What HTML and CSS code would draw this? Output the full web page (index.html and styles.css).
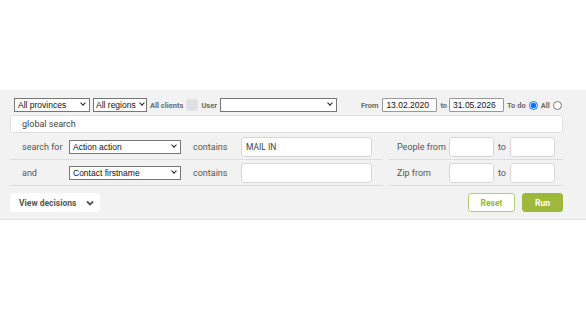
FILE: index.html
```html
<!DOCTYPE html>
<html lang="en">
<head>
  <meta charset="UTF-8">
  <title>Search</title>
  <link rel="stylesheet" href="styles.css">
</head>
<body>
  <div class="panel">
    <div class="topbar">
      <span class="pick sel-prov"><select class="sel"><option>All provinces</option></select></span>
      <span class="pick sel-reg"><select class="sel"><option>All regions</option></select></span>
      <span class="tiny">All clients</span>
      <span class="check"></span>
      <span class="tiny">User</span>
      <span class="pick sel-user"><select class="sel"><option></option></select></span>
      <span class="tiny from">From</span>
      <input class="date" type="text" value="13.02.2020">
      <span class="tiny">to</span>
      <input class="date" type="text" value="31.05.2026">
      <span class="tiny">To do</span>
      <input class="radio" type="radio" name="todo" checked>
      <span class="tiny">All</span>
      <input class="radio" type="radio" name="todo">
    </div>

    <input class="global" type="text" placeholder="global search">

    <div class="grid">
      <div class="row left">
        <span class="lbl lbl-first">search for</span>
        <span class="pick sel-field"><select class="sel"><option>Action action</option></select></span>
        <span class="lbl lbl-op">contains</span>
        <input class="box box-wide" type="text" value="MAIL IN">
      </div>
      <div class="row right">
        <span class="lbl lbl-range">People from</span>
        <input class="box box-small" type="text">
        <span class="lbl lbl-to">to</span>
        <input class="box box-small" type="text">
      </div>
      <div class="row left">
        <span class="lbl lbl-first">and</span>
        <span class="pick sel-field"><select class="sel"><option>Contact firstname</option></select></span>
        <span class="lbl lbl-op">contains</span>
        <input class="box box-wide" type="text">
      </div>
      <div class="row right">
        <span class="lbl lbl-range">Zip from</span>
        <input class="box box-small" type="text">
        <span class="lbl lbl-to">to</span>
        <input class="box box-small" type="text">
      </div>
    </div>

    <div class="actions">
      <button class="btn-decisions">View decisions
        <svg width="8" height="6" viewBox="0 0 8 6"><path d="M1 1.5 L4 4.5 L7 1.5" fill="none" stroke="#555" stroke-width="1.8"/></svg>
      </button>
      <div class="buttons">
        <button class="btn btn-reset">Reset</button>
        <button class="btn btn-run">Run</button>
      </div>
    </div>
  </div>
</body>
</html>
```

FILE: styles.css
```css
body {
  margin: 0;
  font-family: Roboto, 'Open Sans', sans-serif;
  color: #555;
  background-color: white;
}
.panel {
  margin-top: 90px;
  background-color: #f2f2f2;
  border-bottom: 1px solid #e2e2e2;
  padding: 8px 23px 8px 10px;
  height: 113px;
}
.topbar {
  display: flex;
  align-items: center;
  padding-left: 4px;
  height: 14px;
  white-space: nowrap;
}
.topbar > * {
  flex-shrink: 0;
}
.pick {
  position: relative;
  display: block;
  height: 14px;
  flex-shrink: 0;
}
.pick::after {
  content: "";
  position: absolute;
  right: 5px;
  top: 3px;
  width: 3px;
  height: 3px;
  border-right: 1.5px solid #222;
  border-bottom: 1.5px solid #222;
  transform: rotate(45deg);
  pointer-events: none;
}
.sel {
  appearance: none;
  display: block;
  width: 100%;
  font-family: 'Liberation Sans', Arial, sans-serif;
  font-size: 8.5px;
  color: #111;
  height: 14px;
  padding: 0 0 0 3px;
  margin: 0;
  border: 1px solid #767676;
  border-radius: 0;
  background-color: white;
}
.sel-prov { width: 76px; }
.sel-reg { width: 54px; margin-left: 3px; }
.sel-reg::after { right: 3px; }
.sel-reg .sel { padding-left: 2px; }
.sel-user { width: 117px; margin-left: 3px; }
.tiny {
  font-size: 7.5px;
  font-weight: 700;
  color: #6a6a6a;
  margin-left: 3px;
}
.check {
  display: block;
  width: 12px;
  height: 12px;
  background-color: #dde1e4;
  border-radius: 3px;
  margin-left: 3px;
}
.from { margin-left: 24px; margin-right: 2px; }
.date {
  font-family: 'Liberation Sans', Arial, sans-serif;
  font-size: 8.5px;
  color: #111;
  width: 55px;
  height: 14px;
  box-sizing: border-box;
  padding: 0 3px;
  margin: 0 0 0 2px;
  border: 1px solid #999;
  border-radius: 1px;
}
.date + .tiny { margin-left: 3px; }
.radio {
  width: 9px;
  height: 9px;
  margin: 0 0 0 3px;
}
.global {
  display: block;
  width: 100%;
  height: 18px;
  box-sizing: border-box;
  margin-top: 3px;
  padding: 0 11px;
  font-family: inherit;
  font-size: 9px;
  border: 1px solid #e0e0e0;
  border-radius: 3px;
  background-color: white;
}
.global::placeholder { color: #444; }
.grid {
  display: grid;
  grid-template-columns: 373px 174px;
  column-gap: 6px;
  margin-top: 1px;
}
.row {
  display: flex;
  align-items: center;
  height: 25px;
  border-bottom: 1px solid #dcdcdc;
  white-space: nowrap;
}
.row > * {
  flex-shrink: 0;
}
.lbl {
  font-size: 9px;
  color: #555;
}
.lbl-first { width: 47px; padding-left: 12px; }
.lbl-op { width: 48px; margin-left: 12px; }
.lbl-range { width: 52px; padding-left: 8px; }
.lbl-to { width: 12px; margin-left: 4px; }
.sel-field { width: 112px; }
.box {
  height: 20px;
  box-sizing: border-box;
  border: 1px solid #d6d6d6;
  border-radius: 3px;
  background-color: white;
  font-family: inherit;
  font-size: 8.5px;
  color: #444;
  padding: 0 4px;
  margin: 0;
}
.box-wide { width: 131px; }
.box-small { width: 45px; }
.actions {
  display: flex;
  justify-content: space-between;
  align-items: center;
  margin-top: 7px;
}
.btn-decisions {
  display: flex;
  align-items: center;
  gap: 10px;
  width: 90px;
  height: 19px;
  padding: 0 0 0 9px;
  border: none;
  border-radius: 4px;
  background-color: white;
  font-family: inherit;
  font-size: 8.5px;
  font-weight: 700;
  color: #555;
  white-space: nowrap;
}
.buttons {
  display: flex;
  gap: 7px;
}
.btn {
  height: 19px;
  border-radius: 3px;
  font-family: inherit;
  font-size: 8.5px;
  font-weight: 700;
  padding: 0;
}
.btn-reset {
  width: 47px;
  background-color: white;
  border: 1px solid #b6cc74;
  color: #9ab63a;
}
.btn-run {
  width: 41px;
  background-color: #9db83c;
  border: 1px solid #9db83c;
  color: white;
}
```
